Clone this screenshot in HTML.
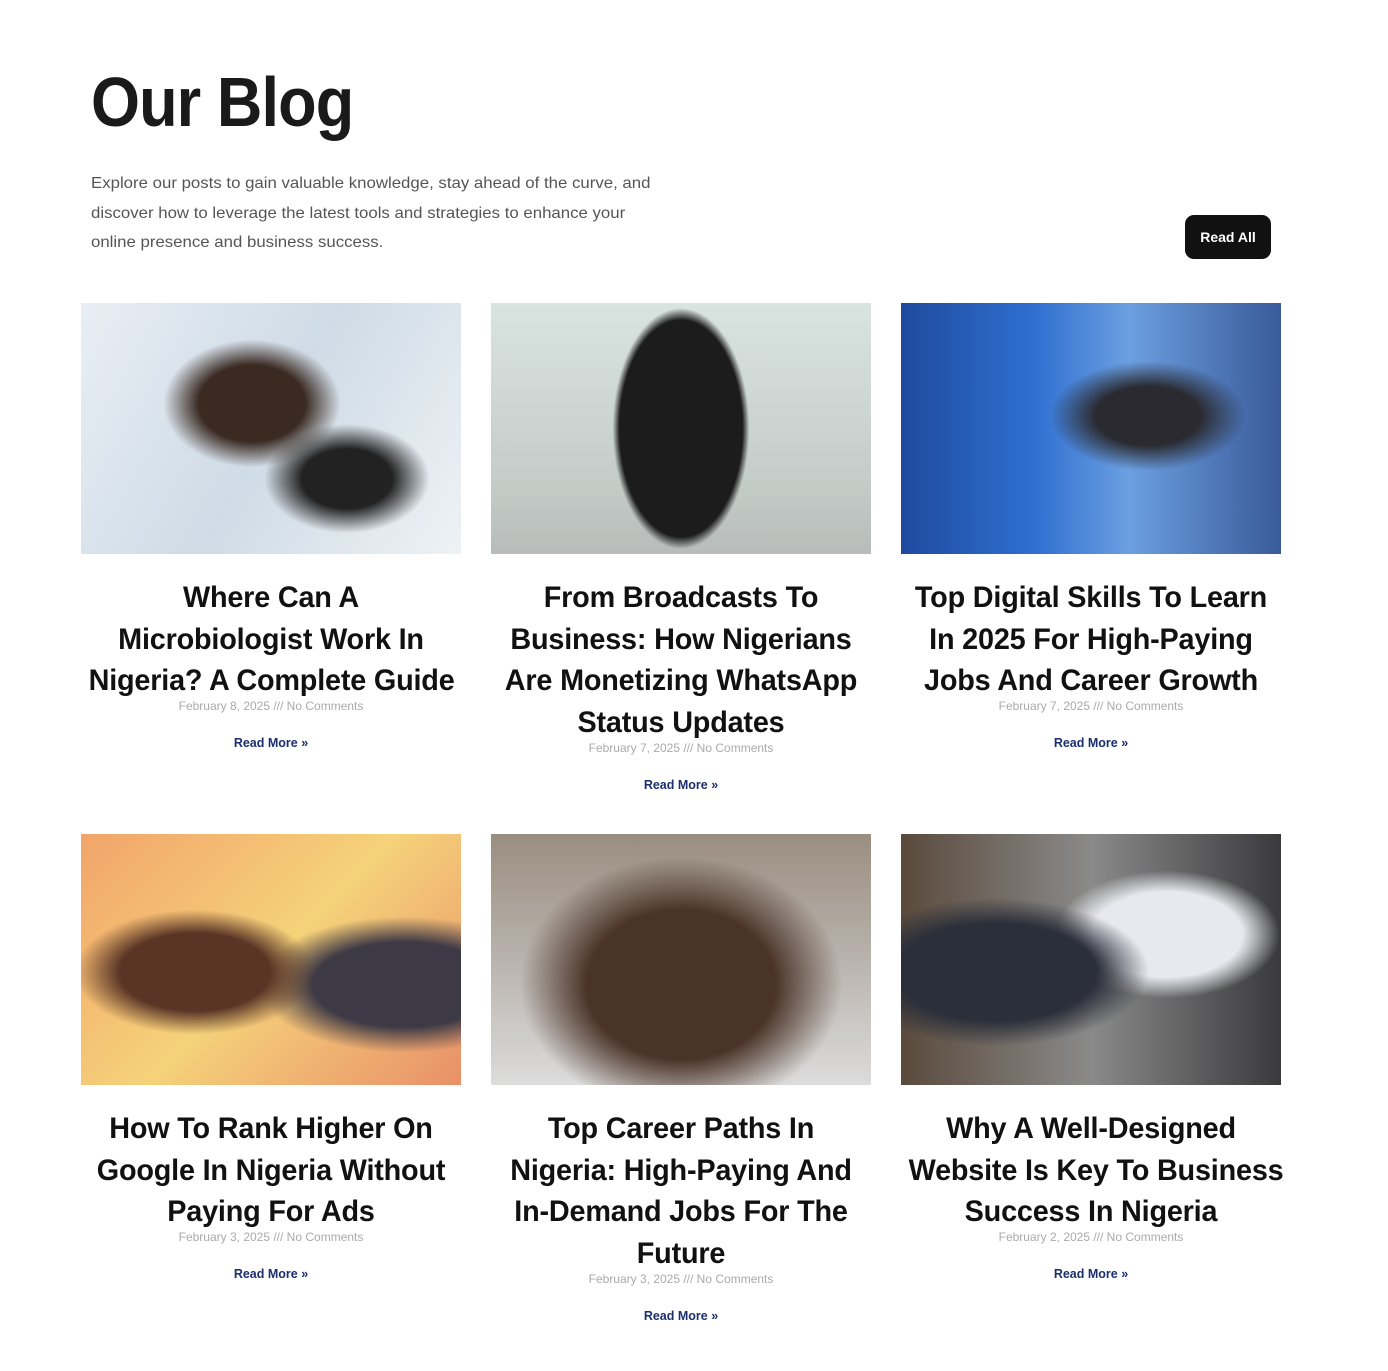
<!DOCTYPE html>
<html><head><meta charset="utf-8"><style>
*{margin:0;padding:0;box-sizing:border-box}
body{width:1388px;height:1371px;background:#fff;font-family:"Liberation Sans",sans-serif;position:relative;overflow:hidden}
h1{position:absolute;left:91px;top:62px;font-size:70px;font-weight:700;color:#1a1a1a;letter-spacing:-1px;transform:scaleX(.9);transform-origin:left}
.intro{position:absolute;left:91px;top:169px;font-size:16px;line-height:29.5px;color:#555;white-space:nowrap;transform:scaleX(1.05);transform-origin:left}
.btn{position:absolute;left:1185px;top:215px;width:86px;height:44px;background:#111;border-radius:9px;color:#fff;font-weight:700;font-size:14px;line-height:44px;text-align:center}
.card{position:absolute;width:380px;text-align:center}
.img{height:251px}
.t{margin-top:23px;font-size:30px;line-height:41.7px;font-weight:700;color:#111;white-space:nowrap;transform:scaleX(.96);letter-spacing:-.2px}
.m{font-size:12px;color:#aaa;line-height:14px;margin-top:-3px;position:relative}
.r{font-size:12.5px;font-weight:700;color:#1b2f6e;margin-top:23px}
</style></head><body>
<h1>Our Blog</h1>
<div class="intro">Explore our posts to gain valuable knowledge, stay ahead of the curve, and<br>discover how to leverage the latest tools and strategies to enhance your<br>online presence and business success.</div>
<div class="btn">Read All</div>

<div class="card" style="left:81px;top:303px"><div class="img" style="background:radial-gradient(ellipse at 45% 40%,#3a2a22 0 18%,transparent 30%),radial-gradient(ellipse at 70% 70%,#222 0 12%,transparent 22%),linear-gradient(120deg,#e8eef4,#cfdbe6 50%,#eef2f5)"></div>
<div class="t">Where Can A<br>Microbiologist Work In<br>Nigeria? A Complete Guide</div><div class="m">February 8, 2025 /// No Comments</div><div class="r">Read More »</div></div>

<div class="card" style="left:491px;top:303px"><div class="img" style="background:radial-gradient(ellipse 18% 48% at 50% 50%,#1c1c1c 0 90%,transparent 100%),linear-gradient(180deg,#d9e3df,#c4cdc9 70%,#b8bcba)"></div>
<div class="t">From Broadcasts To<br>Business: How Nigerians<br>Are Monetizing WhatsApp<br>Status Updates</div><div class="m">February 7, 2025 /// No Comments</div><div class="r">Read More »</div></div>

<div class="card" style="left:901px;top:303px"><div class="img" style="background:radial-gradient(ellipse at 65% 45%,#2a2a30 0 15%,transparent 28%),linear-gradient(90deg,#1e4a9e,#2f6fd0 35%,#6b9fe0 60%,#3a5a9a)"></div>
<div class="t">Top Digital Skills To Learn<br>In 2025 For High-Paying<br>Jobs And Career Growth</div><div class="m">February 7, 2025 /// No Comments</div><div class="r">Read More »</div></div>

<div class="card" style="left:81px;top:834px"><div class="img" style="background:radial-gradient(ellipse at 30% 55%,#5a3526 0 20%,transparent 32%),radial-gradient(ellipse at 85% 60%,#3e3a45 0 20%,transparent 32%),linear-gradient(135deg,#f2a46a,#f5d27a 50%,#e99068)"></div>
<div class="t">How To Rank Higher On<br>Google In Nigeria Without<br>Paying For Ads</div><div class="m">February 3, 2025 /// No Comments</div><div class="r">Read More »</div></div>

<div class="card" style="left:491px;top:834px"><div class="img" style="background:radial-gradient(ellipse at 50% 60%,#4a3328 0 35%,transparent 60%),linear-gradient(180deg,#9a8e80,#b9b3ad 50%,#dcdcdc)"></div>
<div class="t">Top Career Paths In<br>Nigeria: High-Paying And<br>In-Demand Jobs For The<br>Future</div><div class="m">February 3, 2025 /// No Comments</div><div class="r">Read More »</div></div>

<div class="card" style="left:901px;top:834px"><div class="img" style="background:radial-gradient(ellipse at 25% 55%,#2b2f3a 0 25%,transparent 38%),radial-gradient(ellipse at 70% 40%,#e7e9ee 0 20%,transparent 30%),linear-gradient(90deg,#5a4a3c,#8a8a8a 50%,#3a3a3c)"></div>
<div class="t">Why A Well-Designed<br>Website Is Key To Business<br>Success In Nigeria</div><div class="m">February 2, 2025 /// No Comments</div><div class="r">Read More »</div></div>
</body></html>
